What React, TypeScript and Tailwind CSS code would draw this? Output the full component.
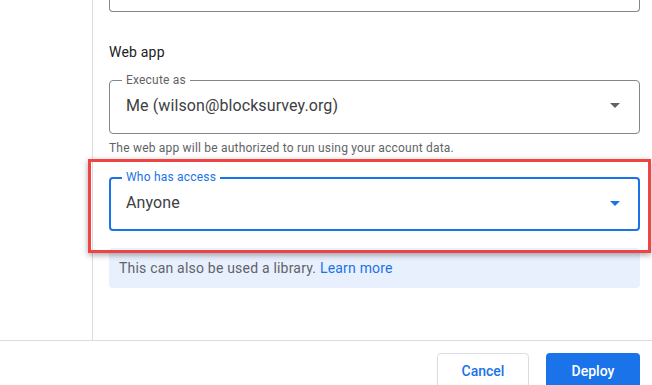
import React from 'react';

const Caret = ({ color }: { color: string }) => (
    <svg width="10" height="5" viewBox="0 0 10 5" className="shrink-0">
        <path d="M0 0 L10 0 L5 5 Z" fill={color} />
    </svg>
);

const OutlinedSelect = ({ label, value, active }: { label: string; value: string; active?: boolean }) => {
    return (
        <div
            className={
                active
                    ? 'relative h-[54px] rounded border-2 border-[#1a73e8] flex items-center pl-[15px] pr-[18px] pb-[2px]'
                    : 'relative h-[54px] rounded border border-[#80868b] flex items-center pl-4 pr-[19px] pb-[3px]'
            }
        >
            {/* floating label sits on top of the border */}
            <span
                className={
                    active
                        ? 'absolute left-[11px] -top-[10px] bg-white px-1 text-[12px] leading-4 tracking-[0.2px] text-[#1a73e8]'
                        : 'absolute left-[12px] -top-[9px] bg-white px-1 text-[12px] leading-4 tracking-[0.2px] text-[#5f6368]'
                }
            >
                {label}
            </span>
            <span className="flex-1 text-[16px] tracking-[0.1px] text-[#3c4043]">{value}</span>
            <Caret color={active ? '#1a73e8' : '#5f6368'} />
        </div>
    );
};

const App = () => {
    return (
        <div className="relative w-[652px] h-[385px] bg-white overflow-hidden flex flex-col" style={{ fontFamily: 'Roboto, "Noto Sans", sans-serif' }}>
            <div className="flex flex-1">
                {/* left rail */}
                <div className="w-[93px] shrink-0 border-r border-[#dadce0]" />

                {/* deployment settings */}
                <div className="flex-1 pl-4 pr-3">
                    <div className="h-[12px] rounded-b border-x border-b border-[#80868b]" />

                    <div className="mt-[30px] text-[14px] leading-5 tracking-[0.2px] text-[#202124]">Web app</div>

                    <div className="mt-[18px]">
                        <OutlinedSelect label="Execute as" value="Me (wilson@blocksurvey.org)" />
                    </div>
                    <div className="mt-[6px] text-[12px] leading-4 tracking-[0.2px] text-[#5f6368]">
                        The web app will be authorized to run using your account data.
                    </div>

                    <div className="mt-[21px]">
                        <OutlinedSelect label="Who has access" value="Anyone" active />
                    </div>

                    <div className="mt-[17px] h-[40px] rounded bg-[#e8f0fe] flex items-center pl-[10px] text-[14px] tracking-[0.2px] text-[#5f6368]">
                        <span>
                            This can also be used a library.{' '}
                            <a className="text-[#1a73e8]" href="#">Learn more</a>
                        </span>
                    </div>
                </div>
            </div>

            {/* footer buttons */}
            <div className="h-[45px] shrink-0 border-t border-[#dadce0] flex justify-end items-start gap-[17px] pt-3 pr-3">
                <button className="w-[92px] h-[36px] rounded border border-[#dadce0] bg-white text-[14px] font-medium text-[#1a73e8]">Cancel</button>
                <button className="w-[94px] h-[36px] rounded bg-[#1a73e8] text-[14px] font-medium text-white">Deploy</button>
            </div>

            {/* red highlight annotation */}
            <div className="absolute left-[88px] top-[159px] w-[563px] h-[94px] border-[3px] border-[#ee4444] shadow-[0_2px_6px_rgba(0,0,0,0.35)]" />
        </div>
    );
};

export default App;
